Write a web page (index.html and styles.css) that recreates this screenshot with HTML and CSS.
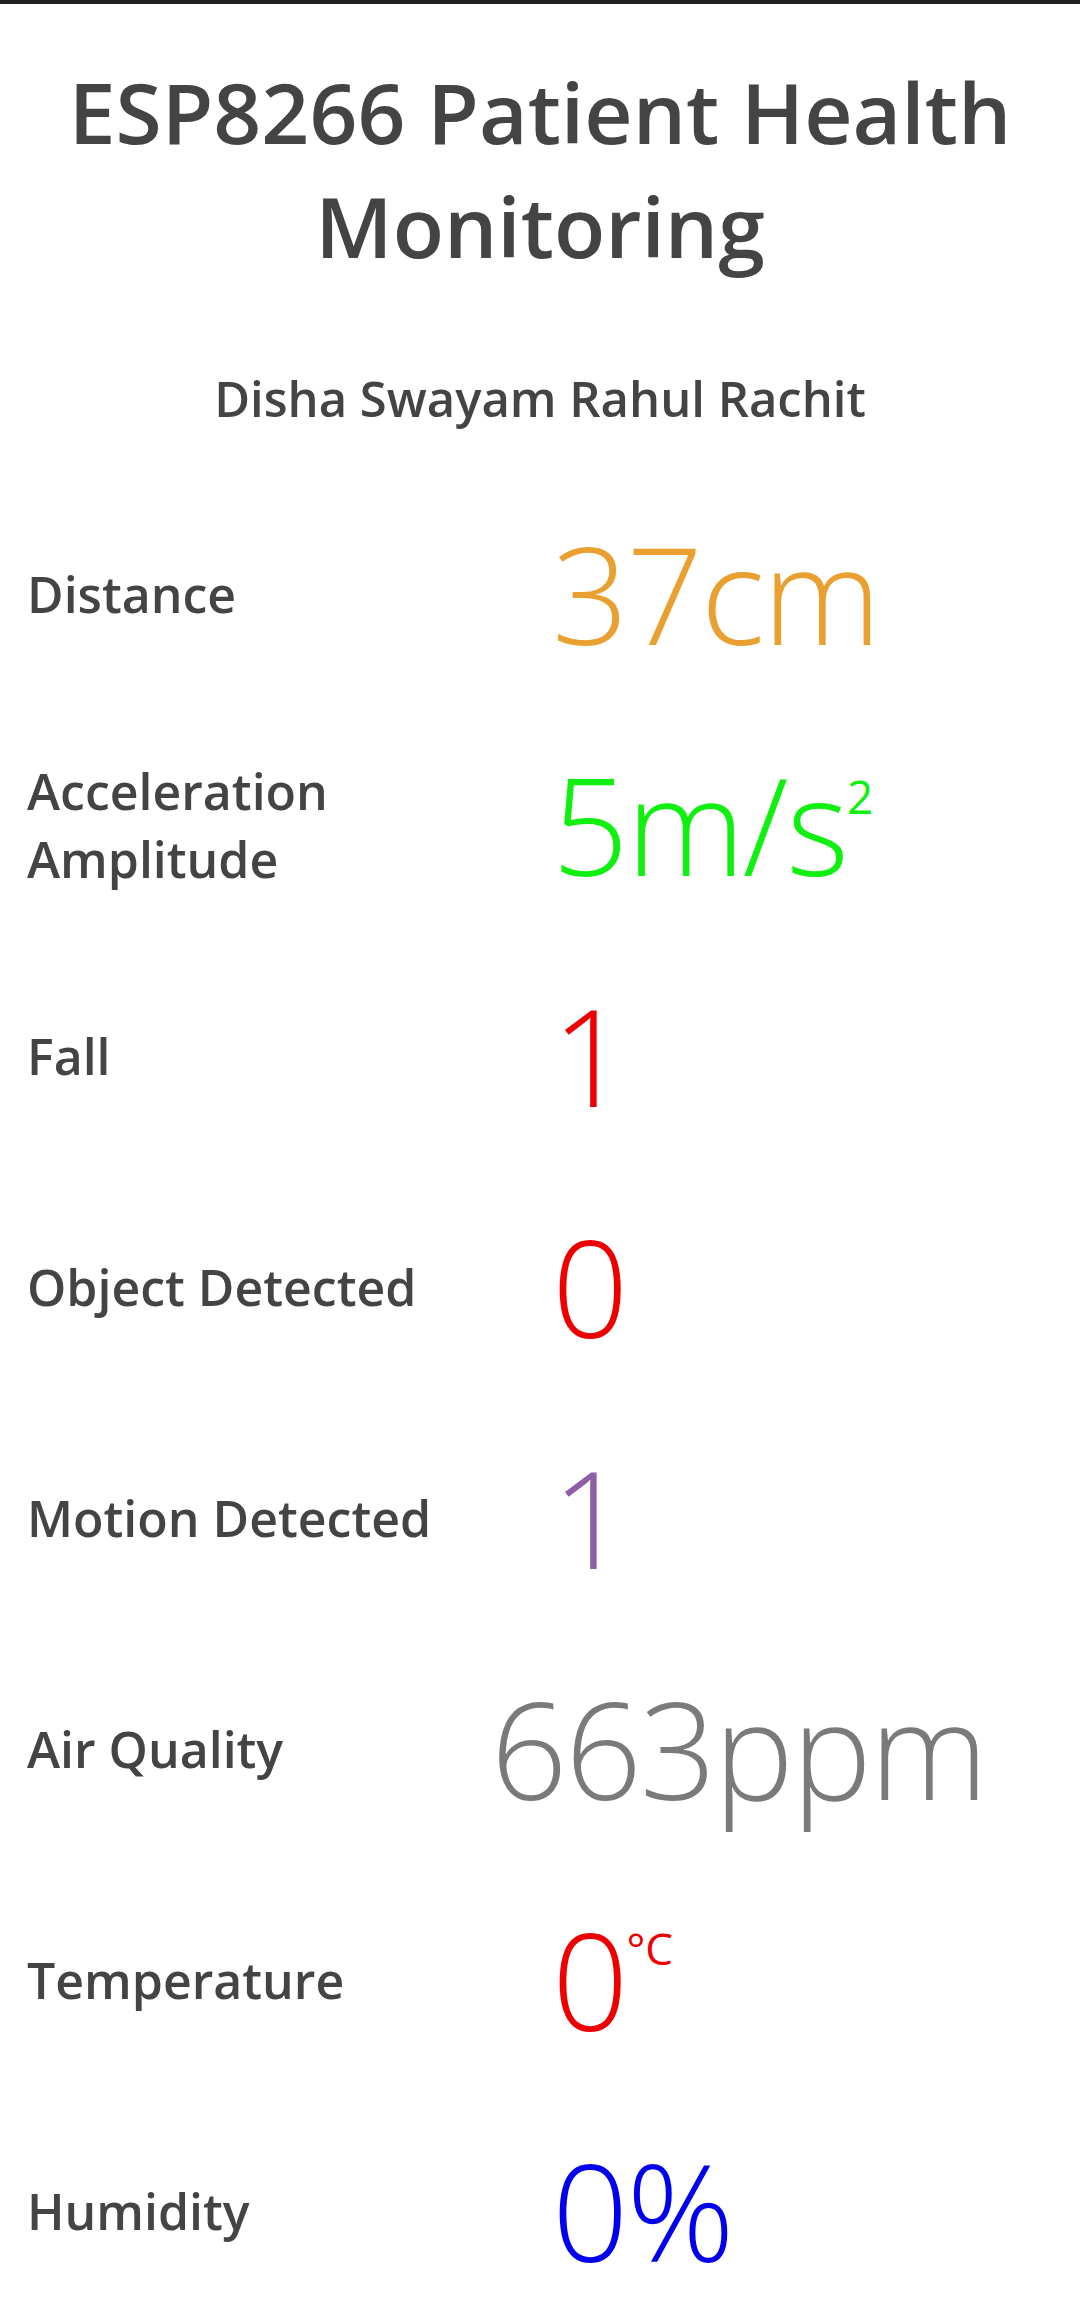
FILE: index.html
```html
<!DOCTYPE html>
<html lang="en">
<head>
<meta charset="utf-8">
<title>ESP8266 Patient Health Monitoring</title>
<link rel="stylesheet" href="styles.css">
</head>
<body>
<div class="topbar"></div>
<h1 class="title">ESP8266 Patient Health Monitoring</h1>
<p class="authors">Disha Swayam Rahul Rachit</p>
<div class="readings">
  <div class="row"><span class="label">Distance</span><span class="value orange">37cm</span></div>
  <div class="row"><span class="label">Acceleration Amplitude</span><span class="value green">5m/s<sup class="unit unit-sq">2</sup></span></div>
  <div class="row"><span class="label">Fall</span><span class="value red">1</span></div>
  <div class="row"><span class="label">Object Detected</span><span class="value red">0</span></div>
  <div class="row"><span class="label">Motion Detected</span><span class="value purple">1</span></div>
  <div class="row"><span class="label">Air Quality</span><span class="value gray">663ppm</span></div>
  <div class="row"><span class="label">Temperature</span><span class="value red">0<sup class="unit unit-deg">&deg;C</sup></span></div>
  <div class="row"><span class="label">Humidity</span><span class="value blue">0%</span></div>
</div>
</body>
</html>
```
FILE: styles.css
```css
html, body {
  margin: 0;
  padding: 0;
  background: #ffffff;
}
body {
  font-family: "Open Sans", "Noto Sans", sans-serif;
  color: #444444;
}
.topbar {
  height: 4px;
  background: #1f1f1f;
}
.title {
  margin: 51px 20px 0;
  font-size: 84px;
  line-height: 114px;
  font-weight: 600;
  text-align: center;
}
.authors {
  margin: 82px 0 0;
  font-size: 49px;
  line-height: 67px;
  font-weight: 600;
  text-align: center;
}
.readings {
  margin-top: 46px;
}
.row {
  display: flex;
  align-items: center;
  padding: 20px 0;
}
.label {
  flex: 0 1 50%;
  box-sizing: border-box;
  padding-left: 27px;
  padding-right: 10px;
  font-size: 50px;
  line-height: 68px;
  font-weight: 600;
}
.value {
  flex: 1 0 auto;
  padding-left: 12px;
  padding-right: 94px;
  font-size: 134px;
  letter-spacing: -2px;
  line-height: 191px;
  font-weight: 300;
  white-space: nowrap;
}
.unit {
  font-weight: 400;
  letter-spacing: 0;
  vertical-align: top;
  line-height: 1;
  position: relative;
  top: 44px;
}
.unit-sq {
  font-size: 46px;
}
.unit-deg {
  font-size: 44px;
  top: 42px;
}
.orange { color: #e9a030; }
.green { color: #10f010; }
.red { color: #ee0000; }
.purple { color: #8e5ea6; }
.gray { color: #7a7a7a; }
.blue { color: #0000ee; }
```
